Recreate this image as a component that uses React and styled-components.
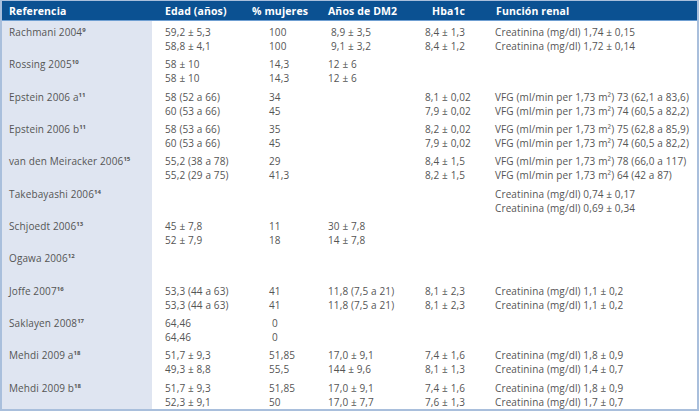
import React from 'react';
import styled, { createGlobalStyle } from 'styled-components';

const GlobalStyle = createGlobalStyle`
  body {
    margin: 0;
    background: #fff;
    font-family: 'Open Sans', 'Liberation Sans', sans-serif;
  }
`;

const COLUMNS = '150px 93px 73px 97px 70px 212px';

const TableBox = styled.div`
  width: 695px;
  height: 408px;
  border: 2px solid #a9bfdc;
  border-top-width: 1px;
  display: flex;
  flex-direction: column;
  color: #555;
  font-size: 10px;
  letter-spacing: 0.12px;
`;

const HeaderRow = styled.div`
  display: grid;
  grid-template-columns: ${COLUMNS};
  height: 19px;
  background: #0b5192;
  border-bottom: 1px solid #6f9fd2;
  align-items: center;
`;

const HeadCell = styled.div`
  color: #fff;
  font-weight: 700;
  font-size: 10.5px;
  padding-left: ${(p) => p.pad}px;
  white-space: nowrap;
`;

const Body = styled.div`
  flex: 1;
  display: flex;
  flex-direction: column;
`;

const Row = styled.div`
  flex: 1;
  display: grid;
  grid-template-columns: ${COLUMNS};
`;

const Cell = styled.div`
  padding-top: 4px;
  padding-left: ${(p) => p.pad}px;
  line-height: 14px;
  white-space: nowrap;
  background: ${(p) => (p.shaded ? '#dfe5f1' : 'transparent')};
`;

const Line = styled.div`
  padding-left: ${(p) => p.indent || 0}px;
`;

const Sup = styled.sup`
  font-size: 6px;
  font-weight: 700;
  line-height: 0;
  vertical-align: 4px;
  letter-spacing: 0;
`;

const headers = [
  { label: 'Referencia', pad: 7 },
  { label: 'Edad (años)', pad: 13 },
  { label: '% mujeres', pad: 7 },
  { label: 'Años de DM2', pad: 10 },
  { label: 'Hba1c', pad: 17 },
  { label: 'Función renal', pad: 11 },
];

const vfg = (v) => `VFG (ml/min per 1,73 m²) ${v}`;
const cre = (v) => `Creatinina (mg/dl) ${v}`;

const rows = [
  {
    ref: 'Rachmani 2004', sup: '9',
    edad: ['59,2 ± 5,3', '58,8 ± 4,1'],
    muj: ['100', '100'], mujIndent: -7,
    dm2: ['8,9 ± 3,5', '9,1 ± 3,2'], dm2Indent: 3,
    hba: ['8,4 ± 1,3', '8,4 ± 1,2'],
    fr: [cre('1,74 ± 0,15'), cre('1,72 ± 0,14')],
  },
  {
    ref: 'Rossing 2005', sup: '10',
    edad: ['58 ± 10', '58 ± 10'],
    muj: ['14,3', '14,3'],
    dm2: ['12 ± 6', '12 ± 6'],
  },
  {
    ref: 'Epstein 2006 a', sup: '11',
    edad: ['58 (52 a 66)', '60 (53 a 66)'],
    muj: ['34', '45'],
    hba: ['8,1 ± 0,02', '7,9 ± 0,02'],
    fr: [vfg('73 (62,1 a 83,6)'), vfg('74 (60,5 a 82,2)')],
  },
  {
    ref: 'Epstein 2006 b', sup: '11',
    edad: ['58 (53 a 66)', '60 (53 a 66)'],
    muj: ['35', '45'],
    hba: ['8,2 ± 0,02', '7,9 ± 0,02'],
    fr: [vfg('75 (62,8 a 85,9)'), vfg('74 (60,5 a 82,2)')],
  },
  {
    ref: 'van den Meiracker 2006', sup: '15',
    edad: ['55,2 (38 a 78)', '55,2 (29 a 75)'],
    muj: ['29', '41,3'],
    hba: ['8,4 ± 1,5', '8,2 ± 1,5'],
    fr: [vfg('78 (66,0 a 117)'), vfg('64 (42 a 87)')],
  },
  {
    ref: 'Takebayashi 2006', sup: '14',
    fr: [cre('0,74 ± 0,17'), cre('0,69 ± 0,34')],
  },
  {
    ref: 'Schjoedt 2006', sup: '13',
    edad: ['45 ± 7,8', '52 ± 7,9'],
    muj: ['11', '18'],
    dm2: ['30 ± 7,8', '14 ± 7,8'],
  },
  { ref: 'Ogawa 2006', sup: '12' },
  {
    ref: 'Joffe 2007', sup: '16',
    edad: ['53,3 (44 a 63)', '53,3 (44 a 63)'],
    muj: ['41', '41'],
    dm2: ['11,8 (7,5 a 21)', '11,8 (7,5 a 21)'],
    hba: ['8,1 ± 2,3', '8,1 ± 2,3'],
    fr: [cre('1,1 ± 0,2'), cre('1,1 ± 0,2')],
  },
  {
    ref: 'Saklayen 2008', sup: '17',
    edad: ['64,46', '64,46'],
    muj: ['0', '0'], mujIndent: 3,
  },
  {
    ref: 'Mehdi 2009 a', sup: '18',
    edad: ['51,7 ± 9,3', '49,3 ± 8,8'],
    muj: ['51,85', '55,5'],
    dm2: ['17,0 ± 9,1', '144 ± 9,6'],
    hba: ['7,4 ± 1,6', '8,1 ± 1,3'],
    fr: [cre('1,8 ± 0,9'), cre('1,4 ± 0,7')],
  },
  {
    ref: 'Mehdi 2009 b', sup: '18',
    edad: ['51,7 ± 9,3', '52,3 ± 9,1'],
    muj: ['51,85', '50'],
    dm2: ['17,0 ± 9,1', '17,0 ± 7,7'],
    hba: ['7,4 ± 1,6', '7,6 ± 1,3'],
    fr: [cre('1,8 ± 0,9'), cre('1,7 ± 0,7')],
  },
];

const Lines = ({ values = [], indent }) =>
  values.map((v, i) => (
    <Line key={i} indent={indent}>
      {v}
    </Line>
  ));

const StudyRow = ({ row }) => (
  <Row>
    <Cell pad={7} shaded>
      {row.ref}
      <Sup>{row.sup}</Sup>
    </Cell>
    <Cell pad={13}>
      <Lines values={row.edad} />
    </Cell>
    <Cell pad={24}>
      <Lines values={row.muj} indent={row.mujIndent} />
    </Cell>
    <Cell pad={10}>
      <Lines values={row.dm2} indent={row.dm2Indent} />
    </Cell>
    <Cell pad={10}>
      <Lines values={row.hba} />
    </Cell>
    <Cell pad={10}>
      <Lines values={row.fr} />
    </Cell>
  </Row>
);

const App = () => (
  <>
    <GlobalStyle />
    <TableBox>
      <HeaderRow>
        {headers.map((h) => (
          <HeadCell key={h.label} pad={h.pad}>
            {h.label}
          </HeadCell>
        ))}
      </HeaderRow>
      <Body>
        {rows.map((row) => (
          <StudyRow row={row} key={row.ref} />
        ))}
      </Body>
    </TableBox>
  </>
);

export default App;
